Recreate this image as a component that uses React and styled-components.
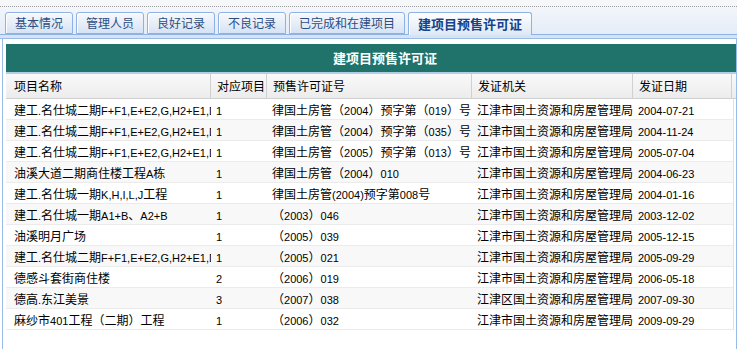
import React from "react";
import styled, { createGlobalStyle } from "styled-components";

const GlobalStyle = createGlobalStyle`
  body {
    margin: 0;
    background: #ffffff;
    font-family: "Noto Sans CJK SC", "Liberation Sans", sans-serif;
    font-size: 12px;
    color: #000;
  }
`;

const TopGap = styled.div`
  height: 6px;
  background: #f6f7f9;
  border-bottom: 1px dotted #9c9c9c;
`;

const TabStrip = styled.div`
  background: linear-gradient(#f3f6fb, #e4ecf7);
  padding: 5px 0 0 5px;
  display: flex;
  align-items: flex-end;
  gap: 3px;
  border-bottom: 1px solid #8db2e3;
`;

const Tab = styled.div`
  height: ${(p) => (p.$active ? "22px" : "20px")};
  margin-bottom: ${(p) => (p.$active ? "-1px" : "0")};
  line-height: ${(p) => (p.$active ? "21px" : "20px")};
  padding: 0 9px;
  border: 1px solid #8db2e3;
  border-bottom: ${(p) => (p.$active ? "none" : "1px solid #8db2e3")};
  border-radius: 3px 3px 0 0;
  white-space: nowrap;
  font-size: ${(p) => (p.$active ? "13px" : "12px")};
  font-weight: ${(p) => (p.$active ? "bold" : "normal")};
  color: ${(p) => (p.$active ? "#15428b" : "#2d4d82")};
  background: ${(p) =>
    p.$active
      ? "linear-gradient(#ffffff, #dde8f6)"
      : "linear-gradient(#f7f9fd, #d6e3f4)"};
  box-shadow: inset 1px 1px 0 #ffffff;
`;

const StripFoot = styled.div`
  height: 3px;
  background: #d6e3f4;
  border-bottom: 1px solid #99bbe8;
`;

const Panel = styled.div`
  margin-left: 2px;
  border-left: 1px solid #99bbe8;
  border-right: 1px solid #99bbe8;
  padding: 5px 0 30px 3px;
  background: #ffffff;
`;

const TitleBar = styled.div`
  height: 28px;
  line-height: 28px;
  background: #1f736b;
  color: #ffffff;
  font-size: 13px;
  font-weight: bold;
  text-align: center;
  padding-left: 28px;
  border-bottom: 2px solid #b4cde6;
`;

const COLS = "205px 56px 205px 161px 99px";

const HeadRow = styled.div`
  display: grid;
  grid-template-columns: ${COLS} 1fr;
  height: 24px;
  background: linear-gradient(#f9f9f9, #ececec);
  border-bottom: 1px solid #d0d0d0;
`;

const HeadCell = styled.div`
  line-height: 24px;
  padding-left: ${(p) => (p.$first ? "8px" : "6px")};
  border-right: ${(p) => (p.$filler ? "none" : "1px solid #d0d0d0")};
  white-space: nowrap;
  overflow: hidden;
`;

const Row = styled.div`
  display: grid;
  grid-template-columns: ${COLS};
  width: 727px;
  height: 20px;
  box-sizing: content-box;
  border-bottom: 1px solid #ebebeb;
  border-right: 1px solid #e2e2e2;
  background: ${(p) => (p.$alt ? "#f8f8f8" : "#ffffff")};
`;

const Cell = styled.div`
  line-height: 21px;
  padding-left: ${(p) => (p.$first ? "8px" : "5px")};
  white-space: nowrap;
  overflow: hidden;
`;

// latin runs are set smaller in Arial metrics, like the old page did
const Latin = styled.span`
  font-family: "Liberation Sans", Arial, sans-serif;
  font-size: 11px;
`;

const mixed = (text) =>
  text.split(/([\u0000-\u00ff]+)/).map((part, i) =>
    /^[\u0000-\u00ff]+$/.test(part) ? <Latin key={i}>{part}</Latin> : part
  );

const heads = ["项目名称", "对应项目", "预售许可证号", "发证机关", "发证日期"];

const SJ = "江津市国土资源和房屋管理局";
const MSC = "建工.名仕城二期F+F1,E+E2,G,H2+E1,D";

const rows = [
  [MSC, "1", "律国土房管（2004）预字第（019）号", SJ, "2004-07-21"],
  [MSC, "1", "律国土房管（2004）预字第（035）号", SJ, "2004-11-24"],
  [MSC, "1", "律国土房管（2005）预字第（013）号", SJ, "2005-07-04"],
  ["油溪大道二期商住楼工程A栋", "1", "律国土房管（2004）010", SJ, "2004-06-23"],
  ["建工.名仕城一期K,H,I,L,J工程", "1", "律国土房管(2004)预字第008号", SJ, "2004-01-16"],
  ["建工.名仕城一期A1+B、A2+B", "1", "（2003）046", SJ, "2003-12-02"],
  ["油溪明月广场", "1", "（2005）039", SJ, "2005-12-15"],
  [MSC, "1", "（2005）021", SJ, "2005-09-29"],
  ["德感斗套街商住楼", "2", "（2006）019", SJ, "2006-05-18"],
  ["德高.东江美景", "3", "（2007）038", "江津区国土资源和房屋管理局", "2007-09-30"],
  ["麻纱市401工程（二期）工程", "1", "（2006）032", SJ, "2009-09-29"],
];

const tabs = ["基本情况", "管理人员", "良好记录", "不良记录", "已完成和在建项目", "建项目预售许可证"];

export default function App() {
  return (
    <>
      <GlobalStyle />
      <TopGap />
      <TabStrip>
        {tabs.map((t, i) => (
          <Tab key={t} $active={i === tabs.length - 1}>
            {t}
          </Tab>
        ))}
      </TabStrip>
      <StripFoot />
      <Panel>
        <TitleBar>建项目预售许可证</TitleBar>
        <HeadRow>
          {heads.map((h, i) => (
            <HeadCell key={h} $first={i === 0}>
              {h}
            </HeadCell>
          ))}
          <HeadCell $filler />
        </HeadRow>
        {rows.map((r, idx) => (
          <Row key={idx} $alt={idx % 2 === 1}>
            {r.map((c, i) => (
              <Cell key={i} $first={i === 0}>
                {mixed(c)}
              </Cell>
            ))}
          </Row>
        ))}
      </Panel>
    </>
  );
}
